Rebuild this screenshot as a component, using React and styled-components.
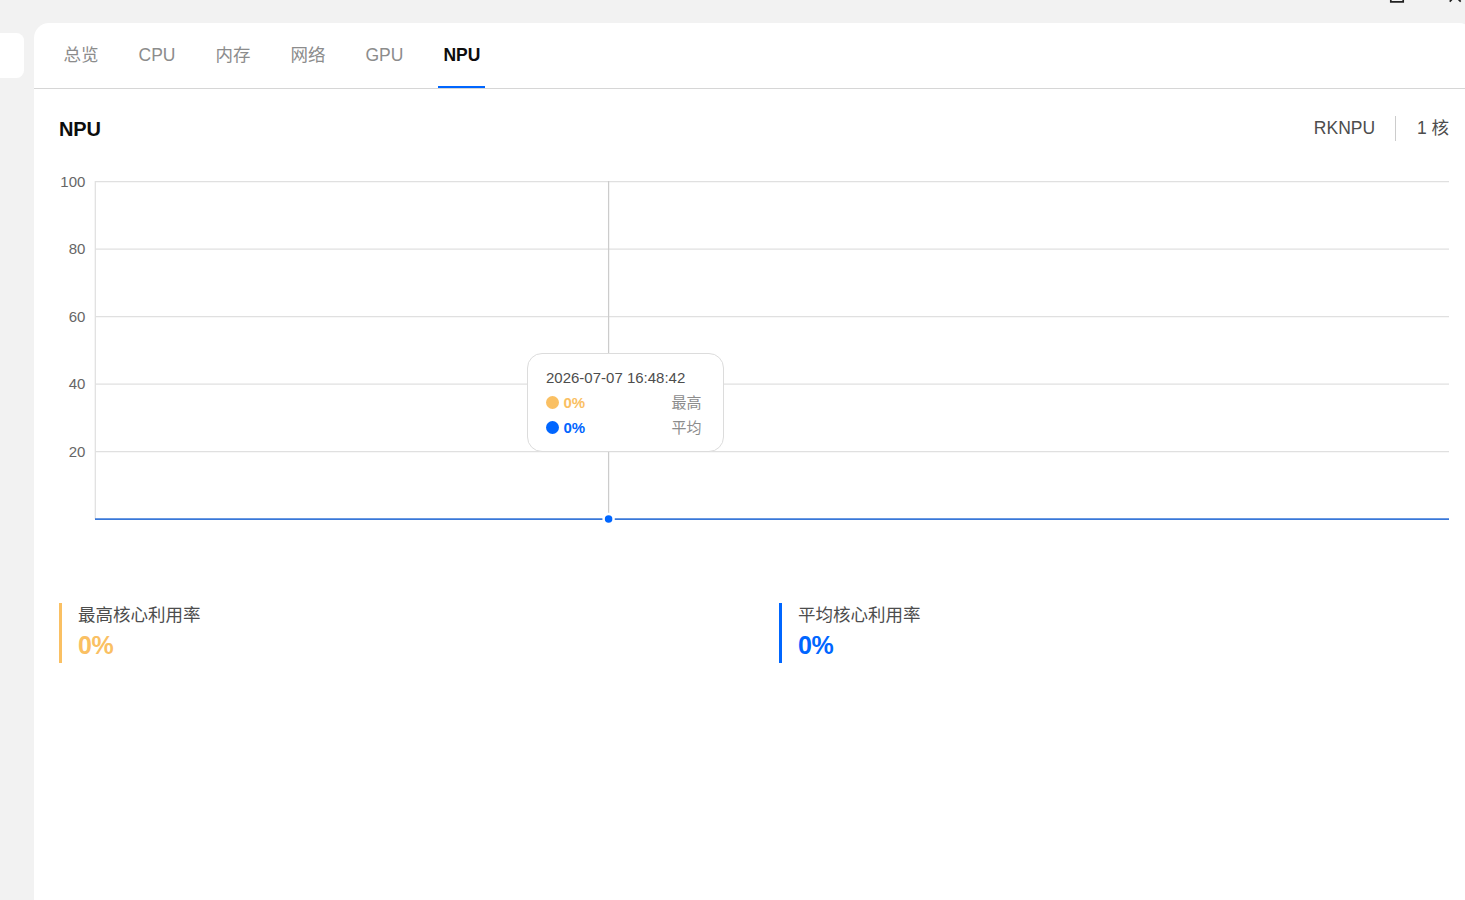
import React from 'react';
import styled, { createGlobalStyle } from 'styled-components';

const BLUE = '#0066ff';
const ORANGE = '#fac063';

const TABS = ['总览', 'CPU', '内存', '网络', 'GPU', 'NPU'];
const TICKS = [100, 80, 60, 40, 20];
const STATS = [
    { label: '最高核心利用率', value: '0%', color: ORANGE },
    { label: '平均核心利用率', value: '0%', color: BLUE },
];
const SERIES = [
    { name: '最高', value: '0%', color: ORANGE },
    { name: '平均', value: '0%', color: BLUE },
];

const yOf = (tick) => 16.6 + (100 - tick) * 3.375;

const UsageChart = () => (
    <ChartArea>
        <ChartSvg width="1390" height="370" viewBox="0 0 1390 370">
            {TICKS.map((tick) => (
                <g key={tick}>
                    <AxisText x="26.4" y={Math.round(yOf(tick)) + 5}>{tick}</AxisText>
                    <line x1="36" x2="1390" y1={yOf(tick)} y2={yOf(tick)} stroke="#e0e0e0" strokeWidth="1.25" />
                </g>
            ))}
            <line x1="36.3" x2="36.3" y1="16" y2="354" stroke="#e0e0e0" strokeWidth="1.25" />
            <line x1="549.6" x2="549.6" y1="16" y2="354" stroke="#cccccc" strokeWidth="1.25" />
            <line x1="36" x2="1390" y1="354.1" y2="354.1" stroke="#3877d8" strokeWidth="1.8" />
            <circle cx="549.6" cy="354.1" r="5" fill={BLUE} stroke="#fff" strokeWidth="2.5" />
        </ChartSvg>
        <Tooltip>
            <TooltipTime>2026-07-07 16:48:42</TooltipTime>
            {SERIES.map((item) => (
                <TooltipRow key={item.name}>
                    <Dot $color={item.color} />
                    <TooltipValue $color={item.color}>{item.value}</TooltipValue>
                    <TooltipName>{item.name}</TooltipName>
                </TooltipRow>
            ))}
        </Tooltip>
    </ChartArea>
);

const App = () => (
    <Window>
        <GlobalStyle />
        <WindowBar>
            <svg width="85" height="23" viewBox="0 0 85 23" fill="none" stroke="#222" strokeWidth="1.7">
                <path d="M10.8 -9V1.9H23.2V-9" />
                <path d="M69.7 1.6L75.2 -4L80.7 1.6" />
            </svg>
        </WindowBar>
        <Body>
            <Sidebar>
                <SideItem />
            </Sidebar>
            <Panel>
                <TabBar>
                    {TABS.map((tab) => (
                        <Tab key={tab} $active={tab === 'NPU'}>{tab}</Tab>
                    ))}
                </TabBar>
                <Content>
                    <Header>
                        <Title>NPU</Title>
                        <Meta>
                            <span>RKNPU</span>
                            <Divider />
                            <span>1 核</span>
                        </Meta>
                    </Header>
                    <UsageChart />
                    <Stats>
                        {STATS.map((stat) => (
                            <Stat key={stat.label} $color={stat.color}>
                                <StatLabel>{stat.label}</StatLabel>
                                <StatValue $color={stat.color}>{stat.value}</StatValue>
                            </Stat>
                        ))}
                    </Stats>
                </Content>
            </Panel>
        </Body>
    </Window>
);

const GlobalStyle = createGlobalStyle`
    * {
        box-sizing: border-box;
    }

    body {
        margin: 0;
        background: #f2f2f2;
        font-family: "Liberation Sans", "Noto Sans CJK SC", sans-serif;
    }
`;

const Window = styled.div`
    display: flex;
    flex-direction: column;
    width: 100%;
    height: 100vh;
    overflow: hidden;
    background: #f2f2f2;
`;

const WindowBar = styled.div`
    display: flex;
    justify-content: flex-end;
    flex: 0 0 23px;
`;

const Body = styled.div`
    display: flex;
    flex: 1;
    min-height: 0;
`;

const Sidebar = styled.div`
    flex: 0 0 34px;
    padding: 10px 10px 0 0;
`;

const SideItem = styled.div`
    height: 45px;
    background: #fff;
    border-radius: 0 7.5px 7.5px 0;
`;

const Panel = styled.div`
    flex: 0 0 1440px;
    background: #fff;
    border-radius: 15px 15px 0 0;
`;

const TabBar = styled.div`
    display: flex;
    gap: 30px;
    height: 66px;
    padding: 0 24.5px;
    border-bottom: 1px solid #d6d6d6;
`;

const Tab = styled.div`
    height: 65px;
    padding: 0 5px;
    font-size: 17.5px;
    line-height: 65px;
    color: ${(props) => (props.$active ? '#0d0d0d' : '#8c8c8c')};
    font-weight: ${(props) => (props.$active ? 700 : 400)};
    border-bottom: 2px solid ${(props) => (props.$active ? BLUE : 'transparent')};
`;

const Content = styled.div`
    padding: 27px 25px 0;
`;

const Header = styled.div`
    display: flex;
    align-items: center;
    justify-content: space-between;
    height: 25px;
`;

const Title = styled.div`
    padding-top: 2px;
    font-size: 20px;
    line-height: 25px;
    font-weight: 700;
    letter-spacing: -0.2px;
    color: #0d0d0d;
`;

const Meta = styled.div`
    display: flex;
    align-items: center;
    font-size: 17.5px;
    line-height: 25px;
    color: #4d4d4d;
`;

const Divider = styled.div`
    width: 1px;
    height: 25px;
    margin: 0 20.8px 0 20px;
    background: #cccccc;
`;

const ChartArea = styled.div`
    position: relative;
    height: 370px;
    margin-top: 24px;
`;

const ChartSvg = styled.svg`
    display: block;
`;

const AxisText = styled.text`
    font-size: 15px;
    text-anchor: end;
    fill: #666;
`;

const Tooltip = styled.div`
    position: absolute;
    left: 468px;
    top: 188px;
    width: 197px;
    height: 99px;
    padding: 11px 21.5px 0 18px;
    background: #fff;
    border: 1px solid #dcdcdc;
    border-radius: 15px;
`;

const TooltipTime = styled.div`
    font-size: 15px;
    line-height: 25px;
    color: #4d4d4d;
`;

const TooltipRow = styled.div`
    display: flex;
    align-items: center;
    height: 25px;
    font-size: 15px;
    line-height: 25px;
`;

const Dot = styled.span`
    width: 13px;
    height: 13px;
    margin-right: 4.5px;
    border-radius: 50%;
    background: ${(props) => props.$color};
`;

const TooltipValue = styled.span`
    font-weight: 700;
    color: ${(props) => props.$color};
`;

const TooltipName = styled.span`
    margin-left: auto;
    color: #8c8c8c;
`;

const Stats = styled.div`
    display: grid;
    grid-template-columns: 1fr 1fr;
    gap: 50px;
    margin-top: 68px;
`;

const Stat = styled.div`
    height: 60px;
    padding-left: 16px;
    border-left: 3px solid ${(props) => props.$color};
`;

const StatLabel = styled.div`
    font-size: 17.5px;
    line-height: 25px;
    color: #4d4d4d;
`;

const StatValue = styled.div`
    font-size: 25px;
    line-height: 35px;
    font-weight: 700;
    letter-spacing: -0.4px;
    color: ${(props) => props.$color};
`;

export default App;
